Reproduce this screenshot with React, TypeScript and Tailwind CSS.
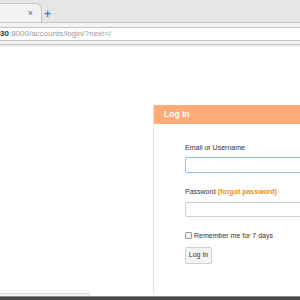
export default function App() {
  return (
    <div className="flex h-[300px] w-[300px] flex-col overflow-hidden bg-white font-['Liberation_Sans',Arial,sans-serif]">
      {/* tab strip */}
      <div className="relative h-[22px] shrink-0 bg-[#e6e6e6]">
        <div className="absolute left-0 top-[3px] flex h-[19px] w-[42px] items-center justify-end rounded-tr-[6px] border-r border-t border-[#c4c4c4] bg-[#f2f2f2] pr-[8px]">
          <span className="text-[9px] leading-none text-[#666]">×</span>
        </div>
        <span className="absolute left-[44px] top-[8px] text-[12px] font-bold leading-none text-[#3d7fd1]">+</span>
      </div>
      {/* toolbar */}
      <div className="flex h-[22px] shrink-0 flex-col justify-center border-t border-[#c8c8c8] bg-[#f2f2f2]">
        <div className="flex h-[14px] items-center border-y border-[#c4c4c4] bg-white text-[8px] leading-none">
          <span className="font-bold text-[#333]">30</span>
          <span className="text-[#999]">:8000/accounts/login/?next=/</span>
        </div>
      </div>
      <div className="h-[4px] shrink-0 border-t border-[#c8c8c8] bg-gradient-to-b from-[#e8e8e8] to-white" />
      {/* page */}
      <div className="flex flex-1 flex-col">
        <div className="ml-[153px] mt-[57px] flex flex-1 flex-col border-l border-[#e2e2e2]">
          <div className="flex h-[19px] items-center bg-[#ffaa77] pl-[10px]">
            <span className="text-[8.5px] font-bold text-white">Log In</span>
          </div>
          <div className="flex flex-col pl-[31px] pt-[20px] text-[7px] text-[#333]">
            <label className="leading-none">Email or Username</label>
            <div className="mt-[6px] h-[16px] w-[140px] rounded-[2px] border border-[#8ec0ec] bg-white" />
            <div className="mt-[15px] leading-none">
              Password <span className="font-bold text-[#f28a1c]">(forgot password)</span>
            </div>
            <div className="mt-[7px] h-[15px] w-[140px] rounded-[2px] border border-[#cfcfcf] bg-white" />
            <div className="mt-[15px] flex items-center gap-[2px] leading-none">
              <span className="h-[7px] w-[7px] rounded-[1px] border border-[#999] bg-[#f4f4f4]" />
              <span>Remember me for 7 days</span>
            </div>
            <button className="mt-[8px] flex h-[17px] w-[27px] items-center justify-center rounded-[2px] border border-[#cfcfcf] bg-[#f3f3f3] text-[7px] text-[#333]">
              Log In
            </button>
          </div>
        </div>
        <div className="h-[3px] w-[90px] border-r border-t border-[#dcdcdc] bg-[#f4f4f4]" />
      </div>
      <div className="h-[4px] shrink-0 border-t border-[#888] bg-[#4a4a48]" />
    </div>
  );
}
